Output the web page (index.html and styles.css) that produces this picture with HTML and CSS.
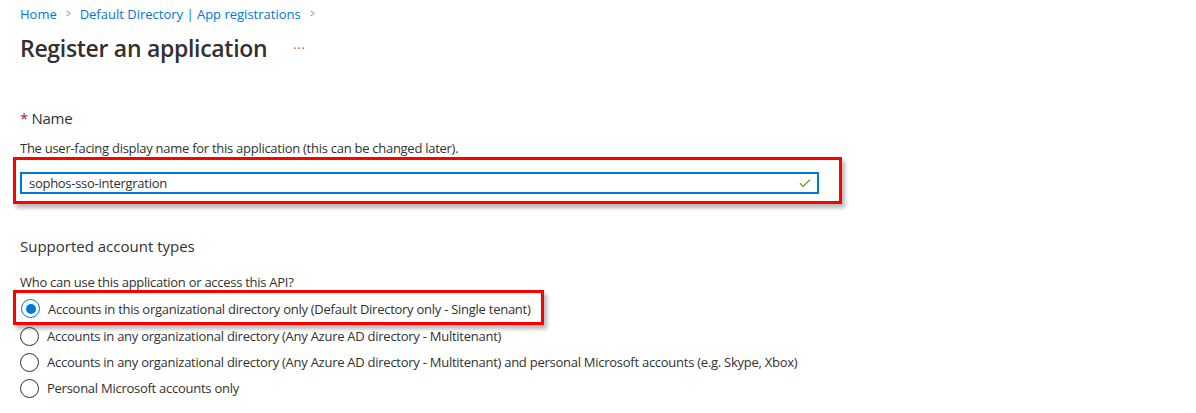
FILE: index.html
```html
<!DOCTYPE html>
<html lang="en">
<head>
<meta charset="utf-8">
<title>Register an application</title>
<link rel="stylesheet" href="styles.css">
</head>
<body>
<div class="page">
  <nav class="breadcrumb">
    <a class="crumb">Home</a>
    <span class="chev">&gt;</span>
    <a class="crumb">Default Directory | App registrations</a>
    <span class="chev">&gt;</span>
  </nav>
  <div class="title-row">
    <h1 class="title">Register an application</h1>
    <span class="more">···</span>
  </div>

  <div class="field-label"><span class="req">*</span> Name</div>
  <div class="desc">The user-facing display name for this application (this can be changed later).</div>
  <div class="highlight highlight-name">
    <div class="input">
      <span class="input-text">sophos-sso-intergration</span>
      <svg class="check" width="12" height="10" viewBox="0 0 12 10"><path d="M1 5.2 L4.2 8.4 L11 1.6" fill="none" stroke="#57a300" stroke-width="1.3"/></svg>
    </div>
  </div>

  <div class="section-label">Supported account types</div>
  <div class="desc desc-who">Who can use this application or access this API?</div>
  <div class="highlight highlight-radio">
    <label class="radio-row"><span class="radio checked"></span><span>Accounts in this organizational directory only (Default Directory only - Single tenant)</span></label>
  </div>
  <div class="radios">
    <label class="radio-row"><span class="radio"></span><span>Accounts in any organizational directory (Any Azure AD directory - Multitenant)</span></label>
    <label class="radio-row"><span class="radio"></span><span>Accounts in any organizational directory (Any Azure AD directory - Multitenant) and personal Microsoft accounts (e.g. Skype, Xbox)</span></label>
    <label class="radio-row"><span class="radio"></span><span>Personal Microsoft accounts only</span></label>
  </div>
</div>
</body>
</html>
```

FILE: styles.css
```css
html, body {
  margin: 0;
  padding: 0;
  background: #ffffff;
}
body {
  font-family: "Open Sans", "Noto Sans", sans-serif;
  color: #323130;
  width: 1196px;
  height: 413px;
  overflow: hidden;
}
.page {
  padding: 5px 0 0 20px;
}
.breadcrumb {
  display: flex;
  align-items: center;
  gap: 8px;
  font-size: 13px;
  line-height: 18px;
}
.crumb {
  color: #0078d4;
}
.chev {
  color: #8a8886;
  font-size: 12px;
  transform: scaleX(0.7);
}
.title-row {
  display: flex;
  align-items: center;
  margin-top: 9px;
  height: 32px;
}
.title {
  margin: 0;
  font-size: 23px;
  font-weight: 600;
  letter-spacing: -0.3px;
  line-height: 32px;
}
.more {
  margin-left: 26px;
  font-size: 12px;
  color: #605e5c;
  letter-spacing: 1px;
}
.field-label {
  margin-top: 44px;
  font-size: 15px;
  line-height: 20px;
  letter-spacing: -0.3px;
}
.req {
  color: #a4262c;
}
.desc {
  margin-top: 12px;
  font-size: 13px;
  line-height: 16px;
  letter-spacing: -0.27px;
}
.highlight {
  margin-left: -7px;
  border: 3px solid #ff0000;
  box-shadow: 3px 4px 4px rgba(0, 0, 0, 0.28);
}
.highlight-name {
  width: 829px;
  margin-top: 1px;
  padding: 12px 0 0 4px;
  box-sizing: border-box;
  height: 47px;
}
.input {
  width: 799px;
  height: 22px;
  box-sizing: border-box;
  border: 2px solid #0078d4;
  display: flex;
  align-items: center;
  justify-content: space-between;
  padding: 0 6px 0 7px;
}
.input-text {
  font-size: 13px;
  letter-spacing: -0.28px;
}
.check {
  display: block;
}
.section-label {
  margin-top: 32px;
  font-size: 15px;
  line-height: 20px;
  letter-spacing: 0;
}
.desc-who {
  margin-top: 18px;
}
.highlight-radio {
  margin-top: 0;
  width: 531px;
  height: 35px;
  box-sizing: border-box;
  padding: 2px 0 0 5px;
  display: flex;
  align-items: center;
}
.radios {
  display: flex;
  flex-direction: column;
  margin-top: -2px;
}
.radio-row {
  display: flex;
  align-items: center;
  gap: 8px;
  height: 26px;
  font-size: 13px;
  letter-spacing: -0.26px;
}
.highlight-radio .radio-row {
  height: 28px;
}
.radio {
  width: 19px;
  height: 19px;
  box-sizing: border-box;
  border: 1px solid #323130;
  border-radius: 50%;
  flex: none;
  display: flex;
  align-items: center;
  justify-content: center;
}
.radio.checked {
  border-color: #0078d4;
}
.radio.checked::after {
  content: "";
  width: 10px;
  height: 10px;
  border-radius: 50%;
  background: #0078d4;
}
```
